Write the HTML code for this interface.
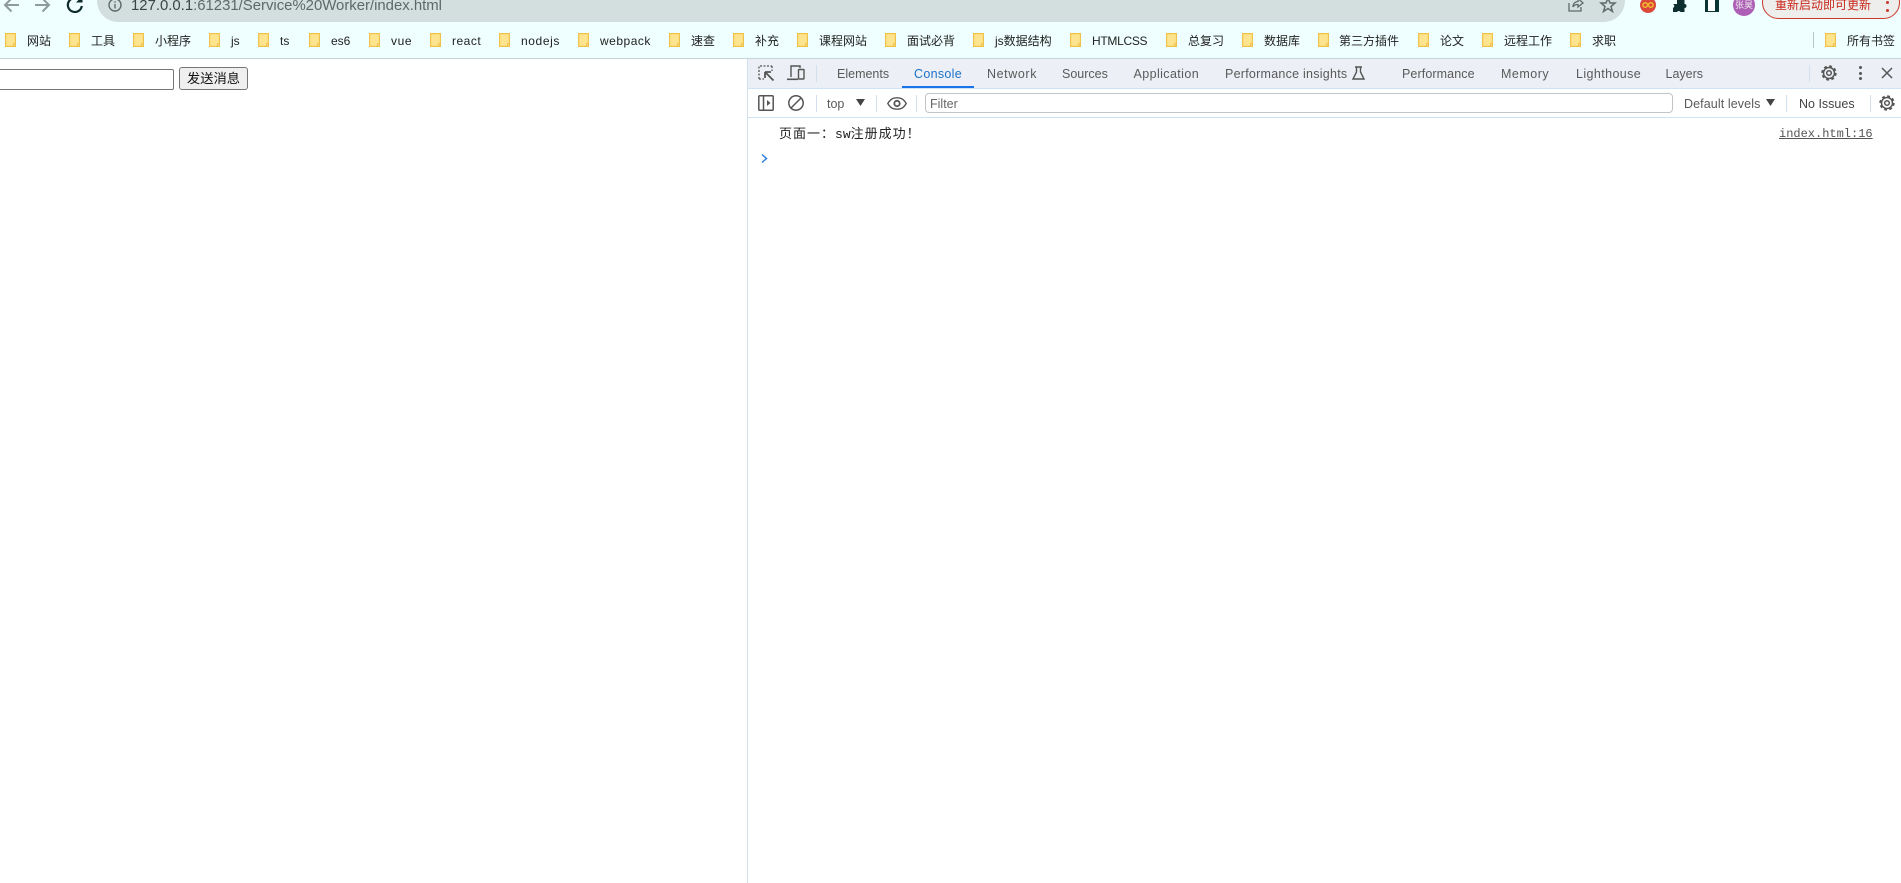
<!DOCTYPE html>
<html><head><meta charset="utf-8"><style>
html,body{margin:0;padding:0;width:1901px;height:883px;overflow:hidden;background:#fff;font-family:"Liberation Sans","Noto Sans CJK SC",sans-serif}
.a{position:absolute;white-space:nowrap}
.b{position:absolute;top:33px;font-size:12px;line-height:16px;color:#222;white-space:nowrap}
.f{position:absolute;top:33px;width:11px;height:14px}
.t{position:absolute;top:66px;font-size:12.5px;line-height:16px;color:#5a5a5a;white-space:nowrap}
.s{position:absolute;width:1px;background:#d3e0f0}
svg{position:absolute;overflow:visible}
</style></head><body>
<svg width="0" height="0" style="position:absolute"><defs><symbol id="fo" viewBox="0 0 11 14"><path d="M.6.6H10.400V13.400H.6Z" fill="#ffe48f" stroke="#efc24a" stroke-width="1.200"/><path d="M8.500 13.400V10.800H10.400" fill="none" stroke="#efc24a"/></symbol></defs></svg>

<!-- browser toolbar -->
<div class="a" style="left:0;top:0;width:1901px;height:59px;background:#effefe;border-bottom:1px solid #c5d6d6;box-sizing:border-box"></div>
<div class="a" style="left:97px;top:-20px;width:1528px;height:42px;background:#d2dfde;border-radius:21px"></div>
<svg style="left:3px;top:-3px" width="16" height="16" fill="none" stroke="#8f9a9a" stroke-width="2"><path d="M16 8H2M8.500 1.500 2 8l6.500 6.500"/></svg>
<svg style="left:35px;top:-3px" width="16" height="16" fill="none" stroke="#8f9a9a" stroke-width="2"><path d="M0 8H14M7.500 1.500 14 8l-6.500 6.500"/></svg>
<svg style="left:67px;top:-4px" width="16" height="16" fill="none" stroke="#0e2b2b" stroke-width="2.200"><path d="M13.600 5A7 7 0 1 0 14.800 10"/><path d="M15.500 0v6.500H9Z" fill="#0e2b2b" stroke="none"/></svg>
<svg style="left:108px;top:-2px" width="14" height="14" fill="none" stroke="#5f6b6b" stroke-width="1.400"><circle cx="7" cy="7" r="6"/><path d="M7 6v4.500M7 3.200v1.500"/></svg>
<div class="a" style="left:131px;top:-3px;font-size:14.900px;line-height:18px;color:#5d6868">
<span style="color:#3a4646">127.0.0.1</span>:61231/Service%20Worker/index.html</div>
<svg style="left:1568px;top:-3px" width="16" height="16" fill="none" stroke="#5f6b6b" stroke-width="1.300"><path d="M1 6V14H13V10"/><path d="M5 10C5 6 8 4.500 10 4.500V1.500L15 6 10 10V7.500C8 7.500 6 8 5 10Z"/></svg>
<svg style="left:1600px;top:-3px" width="16" height="16" fill="none" stroke="#5f6b6b" stroke-width="1.500"><path d="M8 1 10 6H15L11 9.500 12.500 14.500 8 11.500 3.500 14.500 5 9.500 1 6H6Z"/></svg>
<svg style="left:1640px;top:-3px" width="16" height="16"><circle cx="8" cy="8" r="8" fill="#d9483b"/><circle cx="5.200" cy="8" r="2.300" fill="none" stroke="#f2b92e" stroke-width="1.500"/><circle cx="10.800" cy="8" r="2.300" fill="none" stroke="#f2b92e" stroke-width="1.500"/></svg>
<svg style="left:1673px;top:-2px" width="15" height="14" fill="#0e2f2f"><path d="M4 2H6.500A2 2 0 0 1 10 2H11.500V6A2 2 0 0 1 11.500 10V14H7.500A2 2 0 0 0 4 14H0V10A2.200 2.200 0 0 0 0 6H4Z"/></svg>
<div class="a" style="left:1705px;top:-4px;width:14px;height:16px;background:#0b3535"></div>
<div class="a" style="left:1708px;top:-4px;width:7px;height:15px;background:#fff"></div>
<div class="a" style="left:1733px;top:-6px;width:22px;height:22px;border-radius:50%;background:#ad5fb5;color:#eee;font-size:9px;line-height:22px;text-align:center">张昊</div>
<div class="a" style="left:1762px;top:-14px;width:138px;height:33px;box-sizing:border-box;border:1px solid #c9392c;border-radius:17px;background:#eeeeec"></div>
<div class="a" style="left:1775px;top:-3px;font-size:12px;line-height:16px;color:#c9281c">重新启动即可更新</div>
<div class="a" style="left:1885.500px;top:1px;width:3px;height:3px;border-radius:50%;background:#c9392c"></div>
<div class="a" style="left:1885.500px;top:9px;width:3px;height:3px;border-radius:50%;background:#c9392c"></div>

<!-- bookmarks -->
<svg class="f" style="left:5px"><use href="#fo"/></svg><span class="b" style="left:27px">网站</span>
<svg class="f" style="left:69px"><use href="#fo"/></svg><span class="b" style="left:91px">工具</span>
<svg class="f" style="left:133px"><use href="#fo"/></svg><span class="b" style="left:155px">小程序</span>
<svg class="f" style="left:209px"><use href="#fo"/></svg><span class="b" style="left:231px">js</span>
<svg class="f" style="left:258px"><use href="#fo"/></svg><span class="b" style="left:280px">ts</span>
<svg class="f" style="left:309px"><use href="#fo"/></svg><span class="b" style="left:331px">es6</span>
<svg class="f" style="left:369px"><use href="#fo"/></svg><span class="b" style="left:391px;letter-spacing:.6px">vue</span>
<svg class="f" style="left:430px"><use href="#fo"/></svg><span class="b" style="left:452px;letter-spacing:.5px">react</span>
<svg class="f" style="left:499px"><use href="#fo"/></svg><span class="b" style="left:521px;letter-spacing:.6px">nodejs</span>
<svg class="f" style="left:578px"><use href="#fo"/></svg><span class="b" style="left:600px;letter-spacing:.5px">webpack</span>
<svg class="f" style="left:669px"><use href="#fo"/></svg><span class="b" style="left:691px">速查</span>
<svg class="f" style="left:733px"><use href="#fo"/></svg><span class="b" style="left:755px">补充</span>
<svg class="f" style="left:797px"><use href="#fo"/></svg><span class="b" style="left:819px">课程网站</span>
<svg class="f" style="left:885px"><use href="#fo"/></svg><span class="b" style="left:907px">面试必背</span>
<svg class="f" style="left:973px"><use href="#fo"/></svg><span class="b" style="left:995px">js数据结构</span>
<svg class="f" style="left:1070px"><use href="#fo"/></svg><span class="b" style="left:1092px;letter-spacing:-.3px">HTMLCSS</span>
<svg class="f" style="left:1166px"><use href="#fo"/></svg><span class="b" style="left:1188px">总复习</span>
<svg class="f" style="left:1242px"><use href="#fo"/></svg><span class="b" style="left:1264px">数据库</span>
<svg class="f" style="left:1318px"><use href="#fo"/></svg><span class="b" style="left:1339px">第三方插件</span>
<svg class="f" style="left:1418px"><use href="#fo"/></svg><span class="b" style="left:1440px">论文</span>
<svg class="f" style="left:1482px"><use href="#fo"/></svg><span class="b" style="left:1504px">远程工作</span>
<svg class="f" style="left:1570px"><use href="#fo"/></svg><span class="b" style="left:1592px">求职</span>
<div class="a" style="left:1813px;top:32px;width:1px;height:16px;background:#b9c6c6"></div>
<svg class="f" style="left:1825px"><use href="#fo"/></svg><span class="b" style="left:1847px">所有书签</span>

<!-- page -->
<div class="a" style="left:-10px;top:69px;width:184px;height:21px;box-sizing:border-box;border:1px solid #767676;border-radius:2px;background:#fff"></div>
<div class="a" style="left:179px;top:67px;width:69px;height:23px;box-sizing:border-box;border:1px solid #767676;border-radius:3px;background:#efefef;font-size:13.300px;line-height:21px;text-align:center;color:#111">发送消息</div>

<!-- devtools -->
<div class="a" style="left:747px;top:59px;width:1154px;height:824px;background:#fff;border-left:1px solid #cfe0ee;box-sizing:border-box"></div>
<div class="a" style="left:748px;top:59px;width:1153px;height:29px;background:#eceff5;border-bottom:1px solid #d0e2f7;box-sizing:content-box"></div>
<div class="a" style="left:748px;top:117px;width:1153px;height:1px;background:#d0e2f7"></div>
<div class="s" style="left:816px;top:65px;height:17px"></div>
<div class="s" style="left:1809px;top:65px;height:17px"></div>

<svg style="left:758px;top:65px" width="17" height="17" fill="none" stroke="#555" stroke-width="1.300"><path d="M1 14V1H14" stroke-dasharray="2 1.500"/><path d="M1 14H6M14 1V6" stroke-dasharray="2 1.500"/><path d="M7 7H13M7 7V13M7 7 15.500 15.500" stroke-width="1.800"/></svg>
<svg style="left:787px;top:65px" width="18" height="16" fill="none" stroke="#555" stroke-width="1.400"><path d="M4 12V1H13V3"/><path d="M0 14.300H11" stroke-width="1.600"/><rect x="11.500" y="4.500" width="5.500" height="9.500" rx=".5"/></svg>

<span class="t" style="left:837px">Elements</span>
<span class="t" style="left:914px;color:#1a73c8;letter-spacing:.3px">Console</span>
<span class="t" style="left:987px;letter-spacing:.6px">Network</span>
<span class="t" style="left:1062px">Sources</span>
<span class="t" style="left:1133.500px;letter-spacing:.4px">Application</span>
<span class="t" style="left:1225px;letter-spacing:.25px">Performance insights</span>
<svg style="left:1352px;top:66px" width="13" height="14" fill="none" stroke="#555" stroke-width="1.400"><path d="M3 1H10M4.500 1V6L1 13H12L8.500 6V1"/></svg>
<span class="t" style="left:1402px;letter-spacing:.1px">Performance</span>
<span class="t" style="left:1501px;letter-spacing:.5px">Memory</span>
<span class="t" style="left:1576px;letter-spacing:.4px">Lighthouse</span>
<span class="t" style="left:1665.500px">Layers</span>
<div class="a" style="left:902px;top:86px;width:72px;height:2px;background:#1a73e8"></div>

<svg style="left:1821px;top:65px" width="16" height="16" viewBox="0 0 16 16" fill="none" stroke="#555"><circle cx="8" cy="8" r="5.500" stroke-width="1.500"/><circle cx="8" cy="8" r="2.300" stroke-width="1.500"/><circle cx="8" cy="8" r="6.800" stroke-width="1.800" stroke-dasharray="2.800 2.540"/></svg>
<div class="a" style="left:1858.500px;top:66px;width:3px;height:3px;border-radius:50%;background:#555"></div>
<div class="a" style="left:1858.500px;top:71.500px;width:3px;height:3px;border-radius:50%;background:#555"></div>
<div class="a" style="left:1858.500px;top:77px;width:3px;height:3px;border-radius:50%;background:#555"></div>
<svg style="left:1882px;top:68px" width="10" height="10" stroke="#555" stroke-width="1.500"><path d="M0 0 10 10M10 0 0 10"/></svg>

<!-- console toolbar -->
<svg style="left:758px;top:95px" width="16" height="16" fill="none" stroke="#555" stroke-width="1.500"><rect x=".8" y=".8" width="14.400" height="14.400" rx="1"/><path d="M5.500 1V15"/><path d="M9 5 12.500 8 9 11Z" fill="#555" stroke="none"/></svg>
<svg style="left:788px;top:95px" width="16" height="16" fill="none" stroke="#555" stroke-width="1.500"><circle cx="8" cy="8" r="7.200"/><path d="M3 13 13 3"/></svg>
<div class="s" style="left:816px;top:95px;height:17px"></div>
<span class="t" style="left:827px;top:96px">top</span>
<svg style="left:856px;top:99px" width="9" height="7" fill="#444"><path d="M0 0H9L4.500 7Z"/></svg>
<div class="s" style="left:876px;top:95px;height:17px"></div>
<svg style="left:887px;top:97px" width="20" height="13" fill="none" stroke="#555" stroke-width="1.400"><path d="M.8 6.500C4 1 7 .8 10 .8S16 1 19.200 6.500C16 12 13 12.200 10 12.200S4 12 .8 6.500Z"/><circle cx="10" cy="6.500" r="2.700" stroke-width="1.800"/></svg>
<div class="s" style="left:916px;top:95px;height:17px"></div>
<div class="a" style="left:925px;top:93px;width:748px;height:20px;box-sizing:border-box;border:1px solid #c4c4c4;border-radius:4px;background:#fff;font-size:12.500px;line-height:20px;padding-left:4px;color:#666">Filter</div>
<span class="t" style="left:1684px;top:96px;letter-spacing:.1px">Default levels</span>
<svg style="left:1766px;top:99px" width="9" height="7" fill="#444"><path d="M0 0H9L4.500 7Z"/></svg>
<div class="s" style="left:1786px;top:95px;height:17px"></div>
<span class="t" style="left:1799px;top:96px;color:#444">No Issues</span>
<div class="s" style="left:1870px;top:95px;height:17px"></div>
<svg style="left:1879px;top:95px" width="16" height="16" viewBox="0 0 16 16" fill="none" stroke="#555"><circle cx="8" cy="8" r="5.500" stroke-width="1.500"/><circle cx="8" cy="8" r="2.300" stroke-width="1.500"/><circle cx="8" cy="8" r="6.800" stroke-width="1.800" stroke-dasharray="2.800 2.540"/></svg>

<!-- console -->
<div class="a" style="left:779px;top:127px;font-size:13px;line-height:16px;color:#222;letter-spacing:1px;font-family:'Liberation Mono','Noto Sans CJK SC',monospace">页面一：<span style="letter-spacing:0">sw</span>注册成功！</div>
<div class="a" style="left:1779px;top:126px;font-size:12px;line-height:16px;color:#555;text-decoration:underline;font-family:'Liberation Mono',monospace">index.html:16</div>
<svg style="left:761px;top:154px" width="7" height="9" fill="none" stroke="#2f7fe0" stroke-width="1.500"><path d="M1 .5 5.500 4.500 1 8.500"/></svg>
</body></html>
